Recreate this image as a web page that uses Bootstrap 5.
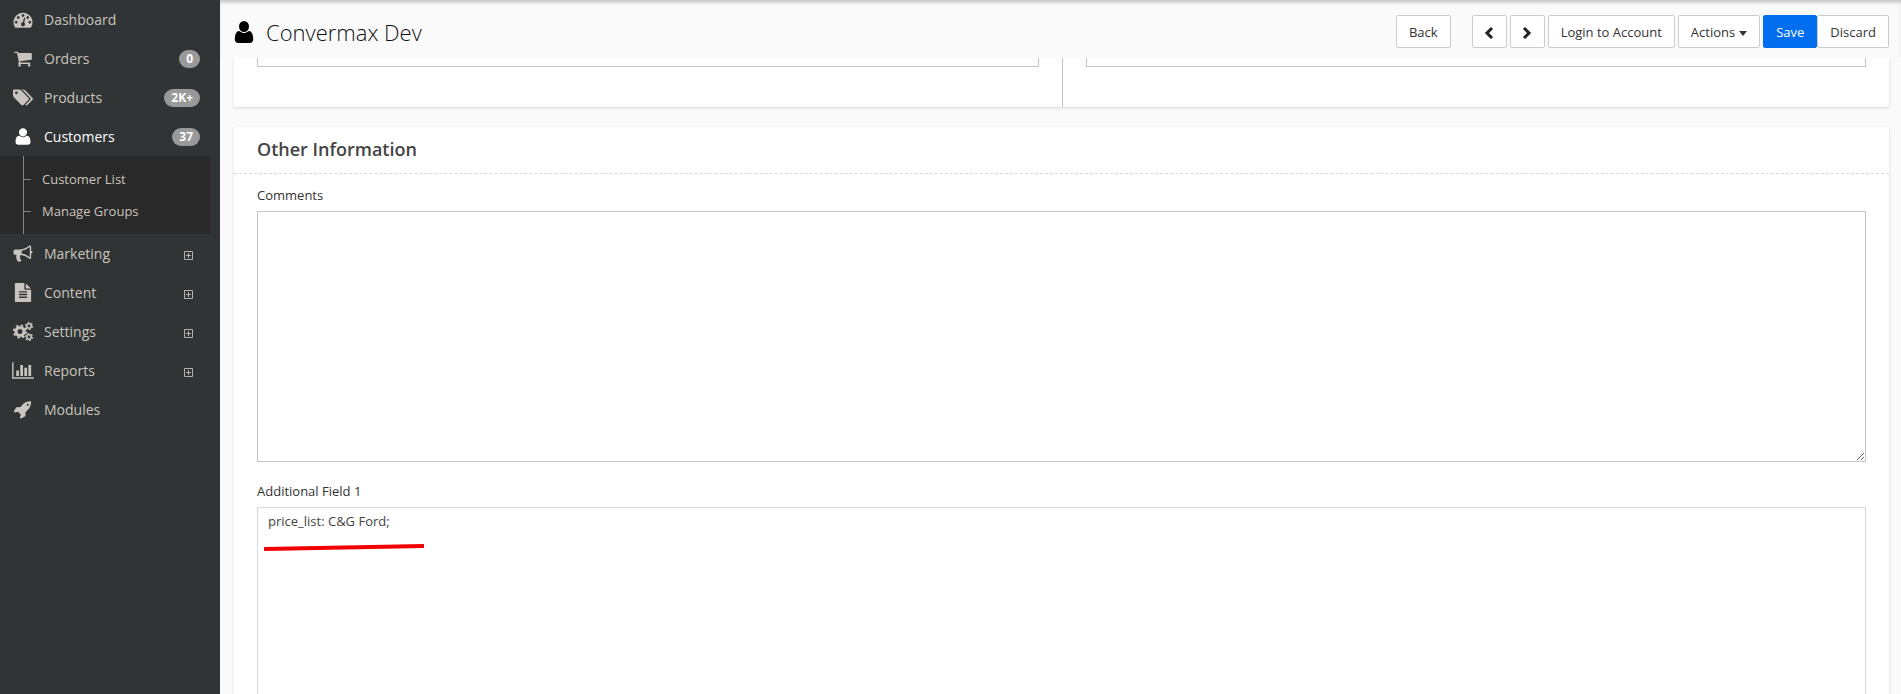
<!DOCTYPE html>
<html lang="en">
<head>
<meta charset="utf-8">
<meta name="viewport" content="width=device-width, initial-scale=1">
<title>Convermax Dev</title>
<link href="https://cdn.jsdelivr.net/npm/bootstrap@5.3.0/dist/css/bootstrap.min.css" rel="stylesheet">
<style>
body{font-family:"Open Sans",sans-serif;font-size:13px;line-height:20px;color:#333;background:#fafafa}
.side{width:220px;background:#303434}
.side-link{height:39px;padding:0 20px 0 13px;font-size:14px;color:#c9c4bf;text-decoration:none}
.side-link.active{color:#fff}
.side-icon{width:20px;height:19px;margin-right:11px;fill:currentColor;flex:none}
.side-icon.wide{width:22px;margin:0 10px 0 -1px}
.count{height:18px;padding:0 7px;border-radius:9px;background:#999;color:#fff;font-size:12px;font-weight:700;line-height:17px}
.expander{width:9px;height:9px;margin-right:7px;margin-top:3px;fill:none;stroke:#b5b1ad}
.submenu{width:210px;padding:0 0 0 23px;background:#292929}
.submenu ul{margin:0;padding:7px 0!important;border-left:1px solid #858585}
.submenu a{height:32px;color:#c9c4bf;text-decoration:none}
.submenu a::before{content:"";width:7px;height:1px;margin-right:11px;background:#858585}
.topbar{height:58px;padding:5px 12px 0 14px;box-shadow:inset 0 4px 4px -2px #bbb}
.page-title{font-size:22px;font-weight:300;line-height:32px;color:#111}
.tools{gap:3px}
.tool{height:33px;padding:0 12px;border:1px solid #ccc;border-radius:2px;background:#fff;color:#333;font-size:13px;line-height:20px}
.tool-icon{width:35px;padding:0}
.tool-back{margin-right:18px}
.tool.dropdown-toggle::after{border-width:5px 4px 0;margin-left:4px;vertical-align:1px}
.tool-save{background:#006eef;border-color:#006eef;color:#fff}
.work{padding:0 12px 0 14px}
.panel{background:#fff;box-shadow:0 1px 3px rgba(0,0,0,.14)}
.previous{height:49px;margin-bottom:20px}
.half{padding:0 23px 40px}
.half+.half{border-left:1px solid #c4c4c4}
.box{border:1px solid #c4c4c4;border-radius:0;font-size:13px;line-height:20px;color:#444;padding:3px 10px}
.half .box{height:34px}
.panel-title{height:47px;padding:0 23px;border-bottom:1px dashed #d8d8d8;font-size:18px;font-weight:600;color:#444}
.fields{padding:11px 23px 0}
.fields label{display:block;margin-bottom:6px}
.comments{height:251px;margin-bottom:19px}
.extra{height:251px;border-color:#d8d8d8;resize:none}
.underline{left:7px;top:35px;width:160px;height:10px}
</style>
</head>
<body>
<div class="d-flex vh-100 overflow-hidden">
  <nav class="side flex-shrink-0" aria-label="Main">
    <a class="side-link d-flex align-items-center" href="#"><svg class="side-icon" viewBox="0 0 1792 1792"><path d="M384 1152q0-53-37.5-90.5t-90.5-37.5-90.5 37.5-37.5 90.5 37.5 90.5 90.5 37.5 90.5-37.5 37.5-90.5zm192-448q0-53-37.5-90.5t-90.5-37.5-90.5 37.5-37.5 90.5 37.5 90.5 90.5 37.5 90.5-37.5 37.5-90.5zm428 481l101-382q6-26-7.5-48.5t-38.5-29.5-48 6.5-30 39.5l-101 382q-60 5-107 43.5t-63 98.5q-20 77 20 146t117 89 146-20 89-117q16-60-6-117t-72-91zm660-33q0-53-37.5-90.5t-90.5-37.5-90.5 37.5-37.5 90.5 37.5 90.5 90.5 37.5 90.5-37.5 37.5-90.5zm-640-640q0-53-37.5-90.5t-90.5-37.5-90.5 37.5-37.5 90.5 37.5 90.5 90.5 37.5 90.5-37.5 37.5-90.5zm448 192q0-53-37.5-90.5t-90.5-37.5-90.5 37.5-37.5 90.5 37.5 90.5 90.5 37.5 90.5-37.5 37.5-90.5zm320 448q0 261-141 483-19 29-54 29h-1402q-35 0-54-29-141-221-141-483 0-182 71-348t191-286 286-191 348-71 348 71 286 191 191 286 71 348z"/></svg>Dashboard</a>
    <a class="side-link d-flex align-items-center" href="#"><svg class="side-icon" viewBox="0 0 1792 1792"><path d="M704 1536q0 52-38 90t-90 38-90-38-38-90 38-90 90-38 90 38 38 90zm896 0q0 52-38 90t-90 38-90-38-38-90 38-90 90-38 90 38 38 90zm128-1088v512q0 24-16.500 42.500t-40.500 21.500l-1044 122q13 60 13 70 0 16-24 64h920q26 0 45 19t19 45-19 45-45 19h-1024q-26 0-45-19t-19-45q0-11 8-31.500t16-36 21.500-40 15.500-29.500l-177-823h-204q-26 0-45-19t-19-45 19-45 45-19h256q16 0 28.500 6.500t19.500 15.500 13 24.500 8 26 5.500 29.500 4.500 26h1201q26 0 45 19t19 45z"/></svg>Orders<span class="count ms-auto">0</span></a>
    <a class="side-link d-flex align-items-center" href="#"><svg class="side-icon" viewBox="0 64 1900 1664"><path d="M448 448q0-53-37.500-90.500t-90.500-37.500-90.500 37.500-37.500 90.500 37.500 90.500 90.500 37.500 90.500-37.500 37.500-90.500zm1067 576q0 53-37 90l-491 492q-39 37-91 37-53 0-90-37l-715-716q-38-37-64.500-101t-26.500-117v-416q0-52 38-90t90-38h416q53 0 117 26.500t102 64.500l715 714q37 39 37 91zm384 0q0 53-37 90l-491 492q-39 37-91 37-36 0-59-14t-53-45l470-470q37-37 37-90 0-52-37-91l-715-714q-38-38-102-64.500t-117-26.500h224q53 0 117 26.500t102 64.500l715 714q37 39 37 91z"/></svg>Products<span class="count ms-auto">2K+</span></a>
    <a class="side-link active d-flex align-items-center" href="#" aria-current="page"><svg class="side-icon" viewBox="0 0 1792 1792"><path d="M1600 1405q0 120-73 189.500t-194 69.500h-874q-121 0-194-69.500t-73-189.500q0-53 3.500-103.500t14-109 26.500-108.500 43-97.500 62-81 85.500-53.500 111.500-20q9 0 42 21.500t74.500 48 108 48 133.500 21.500 133.500-21.500 108-48 74.500-48 42-21.500q61 0 111.500 20t85.500 53.500 62 81 43 97.500 26.500 108.500 14 109 3.500 103.500zm-320-893q0 159-112.500 271.500t-271.500 112.500-271.500-112.500-112.500-271.500 112.500-271.500 271.500-112.500 271.500 112.500 112.500 271.500z"/></svg>Customers<span class="count ms-auto">37</span></a>
    <div class="submenu">
      <ul class="list-unstyled">
        <li><a class="d-flex align-items-center" href="#">Customer List</a></li>
        <li><a class="d-flex align-items-center" href="#">Manage Groups</a></li>
      </ul>
    </div>
    <a class="side-link d-flex align-items-center" href="#"><svg class="side-icon" viewBox="0 0 1792 1792"><path d="M1664 640q53 0 90.500 37.500t37.500 90.500-37.500 90.500-90.500 37.500v384q0 52-38 90t-90 38q-417-347-812-380-58 19-91 66t-31 100.500 40 92.500q-20 33-23 65.500t6 58 33.500 55 48 50 61.500 50.500q-29 58-111.500 83t-168.500 11.500-132-55.500q-7-23-29.500-87.500t-32-94.500-23-89-15-101 3.500-98.500 22-110.500h-122q-66 0-113-47t-47-113v-192q0-66 47-113t113-47h480q435 0 896-384 52 0 90 38t38 90v384zm-128 604v-954q-394 302-768 343v270q377 42 768 341z"/></svg>Marketing<svg class="expander ms-auto" viewBox="0 0 9 9"><path d="M.5.5h8v8h-8zM2 4.500h5M4.500 2v5"/></svg></a>
    <a class="side-link d-flex align-items-center" href="#"><svg class="side-icon" viewBox="0 0 1792 1792"><path d="M1596 476q14 14 28 36h-472v-472q22 14 36 28zm-476 164h544v1056q0 40-28 68t-68 28h-1344q-40 0-68-28t-28-68v-1600q0-40 28-68t68-28h800v544q0 40 28 68t68 28zm160 736v-64q0-14-9-23t-23-9h-704q-14 0-23 9t-9 23v64q0 14 9 23t23 9h704q14 0 23-9t9-23zm0-256v-64q0-14-9-23t-23-9h-704q-14 0-23 9t-9 23v64q0 14 9 23t23 9h704q14 0 23-9t9-23zm0-256v-64q0-14-9-23t-23-9h-704q-14 0-23 9t-9 23v64q0 14 9 23t23 9h704q14 0 23-9t9-23z"/></svg>Content<svg class="expander ms-auto" viewBox="0 0 9 9"><path d="M.5.5h8v8h-8zM2 4.500h5M4.500 2v5"/></svg></a>
    <a class="side-link d-flex align-items-center" href="#"><svg class="side-icon" viewBox="0 0 20 19"><g fill="none" stroke="currentColor"><circle cx="7" cy="9.500" r="4" stroke-width="3"/><circle cx="7" cy="9.500" r="6.200" stroke-width="1.800" stroke-dasharray="2.430 2.440"/><circle cx="16" cy="4" r="2.200" stroke-width="1.600"/><circle cx="16" cy="4" r="3.500" stroke-width="1.200" stroke-dasharray="1.830 1.830"/><circle cx="16" cy="15" r="2.200" stroke-width="1.600"/><circle cx="16" cy="15" r="3.500" stroke-width="1.200" stroke-dasharray="1.830 1.830"/></g></svg>Settings<svg class="expander ms-auto" viewBox="0 0 9 9"><path d="M.5.5h8v8h-8zM2 4.500h5M4.500 2v5"/></svg></a>
    <a class="side-link d-flex align-items-center" href="#"><svg class="side-icon wide" viewBox="0 0 2048 1792"><path d="M640 896v512h-256v-512h256zm384-512v1024h-256v-1024h256zm1024 1152v128h-2048v-1536h128v1408h1920zm-640-896v768h-256v-768h256zm384-256v1024h-256v-1024h256z"/></svg>Reports<svg class="expander ms-auto" viewBox="0 0 9 9"><path d="M.5.5h8v8h-8zM2 4.500h5M4.500 2v5"/></svg></a>
    <a class="side-link d-flex align-items-center" href="#"><svg class="side-icon" viewBox="0 0 1792 1792"><path d="M1440 448q0-40-28-68t-68-28-68 28-28 68 28 68 68 28 68-28 28-68zm224-288q0 249-75.500 430.500t-253.500 360.500q-81 80-195 176l-20 379q-2 16-16 26l-384 224q-7 4-16 4-12 0-23-9l-64-64q-13-14-8-32l85-276-281-281-276 85q-3 1-9 1-14 0-23-9l-64-64q-17-19-5-39l224-384q10-14 26-16l379-20q96-114 176-195 188-187 358-258t431-71q14 0 24 9.500t10 22.500z"/></svg>Modules</a>
  </nav>

  <main class="flex-grow-1 d-flex flex-column">
    <header class="topbar d-flex align-items-center flex-shrink-0">
      <div class="d-flex align-items-center me-auto">
        <svg width="20" height="22" viewBox="128 128 1536 1536" preserveAspectRatio="none" class="me-2" aria-hidden="true"><path d="M1600 1405q0 120-73 189.500t-194 69.500h-874q-121 0-194-69.500t-73-189.500q0-53 3.500-103.500t14-109 26.500-108.500 43-97.500 62-81 85.500-53.500 111.500-20q9 0 42 21.500t74.500 48 108 48 133.500 21.500 133.500-21.500 108-48 74.500-48 42-21.500q61 0 111.500 20t85.500 53.500 62 81 43 97.500 26.500 108.500 14 109 3.500 103.500zm-320-893q0 159-112.500 271.500t-271.500 112.500-271.500-112.500-112.500-271.500 112.500-271.500 271.500-112.500 271.500 112.500 112.500 271.500z"/></svg>
        <h1 class="page-title mb-0 ms-1">Convermax Dev</h1>
      </div>
      <div class="tools d-flex align-items-center">
        <button type="button" class="btn tool tool-back">Back</button>
        <button type="button" class="btn tool tool-icon" aria-label="Previous"><svg width="10" height="12" viewBox="0 0 10 12" fill="none" stroke="#222" stroke-width="3"><path d="M8 1 3 6l5 5"/></svg></button>
        <button type="button" class="btn tool tool-icon" aria-label="Next"><svg width="10" height="12" viewBox="0 0 10 12" fill="none" stroke="#222" stroke-width="3"><path d="m2 1 5 5-5 5"/></svg></button>
        <button type="button" class="btn tool">Login to Account</button>
        <button type="button" class="btn tool dropdown-toggle">Actions</button>
        <div class="d-flex">
          <button type="button" class="btn tool tool-save">Save</button>
          <button type="button" class="btn tool">Discard</button>
        </div>
      </div>
    </header>

    <div class="work flex-grow-1 overflow-hidden">
      <section class="panel previous overflow-hidden d-flex align-items-stretch">
        <div class="half w-50 d-flex align-items-end"><input class="form-control box" type="text" aria-label="Billing detail"></div>
        <div class="half w-50 d-flex align-items-end"><input class="form-control box" type="text" aria-label="Shipping detail"></div>
      </section>
      <section class="panel">
        <h2 class="panel-title d-flex align-items-center mb-0">Other Information</h2>
        <div class="fields">
          <label for="comments">Comments</label>
          <textarea id="comments" class="form-control box comments"></textarea>
          <label for="extra">Additional Field 1</label>
          <div class="position-relative">
            <textarea id="extra" class="form-control box extra">price_list: C&amp;G Ford;</textarea>
            <svg class="underline position-absolute" viewBox="0 0 160 10" aria-hidden="true"><path d="M0 7 160 4" stroke="#f00000" stroke-width="4"/></svg>
          </div>
        </div>
      </section>
    </div>
  </main>
</div>
<script src="https://cdn.jsdelivr.net/npm/bootstrap@5.3.0/dist/js/bootstrap.bundle.min.js"></script>
</body>
</html>
